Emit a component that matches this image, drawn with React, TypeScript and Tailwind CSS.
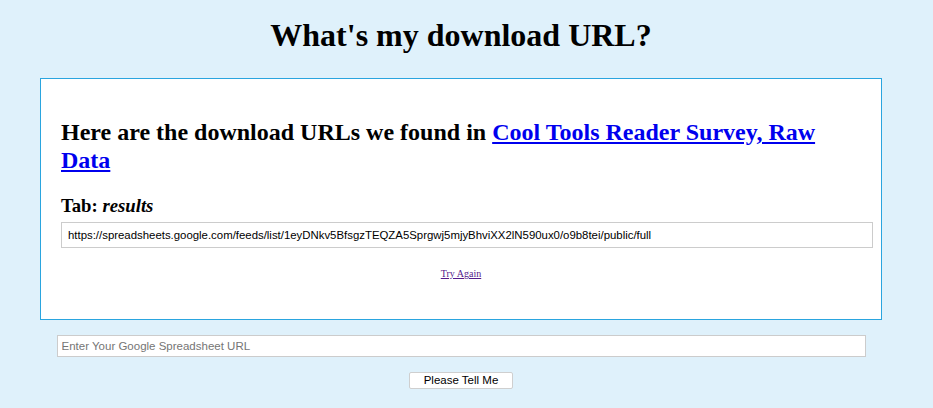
import React from "react";

export default function App() {
  return (
    <div className="min-h-[408px] bg-[#dff1fb] font-['Liberation_Serif',serif] text-black">
      <div className="w-[922px] flex flex-col">
        <h1 className="pt-[17px] text-center text-[32px] font-bold leading-[37px]">
          What's my download URL?
        </h1>
        <div className="mx-[40px] mt-[24px] h-[242px] border border-[#2aa5df] bg-white px-[20px] pt-[39px] flex flex-col">
          <h2 className="text-[24px] font-bold leading-[28px]">
            Here are the download URLs we found in{" "}
            <a href="#" className="text-[#0000ee] underline">
              Cool Tools Reader Survey, Raw Data
            </a>
          </h2>
          <h3 className="mt-[21px] text-[18.72px] font-bold leading-[22px]">
            Tab: <em className="italic">results</em>
          </h3>
          <input
            readOnly
            value="https://spreadsheets.google.com/feeds/list/1eyDNkv5BfsgzTEQZA5Sprgwj5mjyBhviXX2lN590ux0/o9b8tei/public/full"
            className="mt-[5px] h-[26px] w-[812px] shrink-0 border border-[#cccccc] bg-white px-[6px] font-['Liberation_Sans',Arial,sans-serif] text-[11.4px] text-black outline-none"
          />
          <div className="mt-[20px] text-center text-[10px] leading-[12px]">
            <a href="#" className="text-[#551a8b] underline">
              Try Again
            </a>
          </div>
        </div>
        <input
          placeholder="Enter Your Google Spreadsheet URL"
          className="mx-auto mt-[15px] h-[22px] w-[809px] border border-[#cccccc] bg-white px-[4px] font-['Liberation_Sans',Arial,sans-serif] text-[11.5px] text-black placeholder:text-[#757575] outline-none"
        />
        <button className="mx-auto mt-[15px] h-[17px] w-[104px] rounded-[2px] border border-[#cfcfcf] bg-white font-['Liberation_Sans',Arial,sans-serif] text-[11.5px] leading-[15px] text-black">
          Please Tell Me
        </button>
      </div>
    </div>
  );
}
